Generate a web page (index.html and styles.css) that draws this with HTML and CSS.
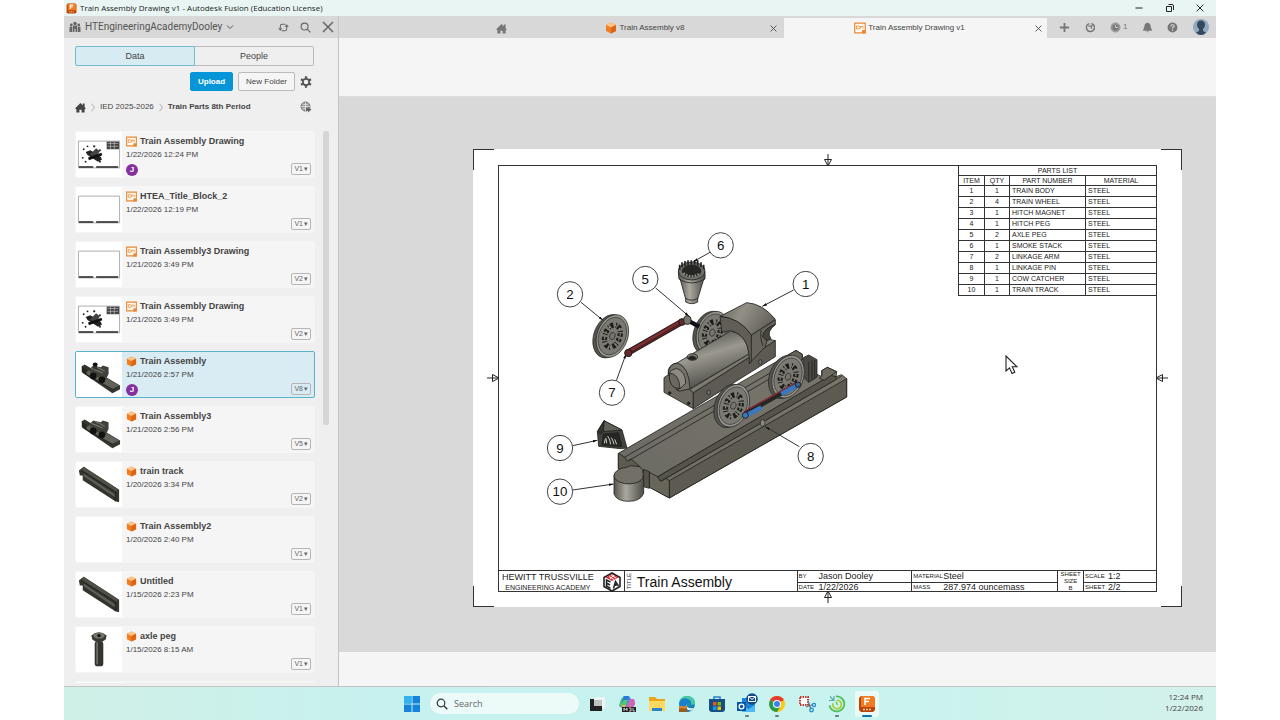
FILE: index.html
```html
<!DOCTYPE html>
<html lang="en">
<head>
<meta charset="utf-8">
<title>Train Assembly Drawing v1 - Autodesk Fusion (Education License)</title>
<link rel="stylesheet" href="styles.css">
</head>
<body>
<svg class="defs" aria-hidden="true">
  <defs>
    <linearGradient id="boiler" x1=".3" y1="0" x2=".7" y2="1"><stop offset=".1" stop-color="#5a5952"/><stop offset=".4" stop-color="#9a988f"/><stop offset=".9" stop-color="#4a4942"/></linearGradient>
    <linearGradient id="roof" x1="0" y1="0" x2="1" y2=".4"><stop offset="0" stop-color="#65635b"/><stop offset=".45" stop-color="#918f86"/><stop offset="1" stop-color="#65635b"/></linearGradient>
    <linearGradient id="round"><stop offset="0" stop-color="#55534c"/><stop offset=".4" stop-color="#aaa89f"/><stop offset="1" stop-color="#4c4b45"/></linearGradient>
    <linearGradient id="bed" x1="0" y1="1" x2="1" y2="0"><stop offset="0" stop-color="#6b6a63"/><stop offset="1" stop-color="#7a766c"/></linearGradient>
    <linearGradient id="edge" x1="0" y1="0" x2="1" y2="1"><stop offset="0" stop-color="#37c3b0"/><stop offset="1" stop-color="#0b63b8"/></linearGradient>
    <marker id="tip" viewBox="0 0 14 8" refX="14" refY="4" markerWidth="14" markerHeight="8" markerUnits="userSpaceOnUse" orient="auto"><path d="M0 0 14 4 0 8z" fill="#111"/></marker>
  </defs>
  <symbol id="cube" viewBox="0 0 12 12"><path d="M6 .5 11 3v6L6 11.500 1 9V3z" fill="#ef7d22"/><path d="M6 .5 11 3 6 5.500 1 3z" fill="#ffc48c"/><path d="M6 5.500 11 3v6l-5 2.500z" fill="#dc6413"/></symbol>
  <symbol id="dwg" viewBox="0 0 12 11"><path d="M.7.7h10.600v9.600H.7z" fill="#fff8f0" stroke="#e88a35" stroke-width="1.200"/><path d="M2.500 3.500h2q1.500 0 1.500 1.500T4.500 6.500h-2zM6.500 6V4h2.500v2" fill="none" stroke="#e88a35" stroke-width=".8"/><path d="M8 7.500h3.500V11H8z" fill="#e88a35"/></symbol>
  <symbol id="fusion" viewBox="0 0 18 18"><path d="M3 1h12l2 2v12l-2 2H3l-2-2V3z" fill="#b94405"/><path d="M4 1h11l2 2v9H3V2z" fill="#f27b21"/><path d="M7 10V3.500h5M7 6.500h4" fill="none" stroke="#fff" stroke-width="1.700"/><path d="M5 14.500h8" stroke="#f9c9a0" stroke-width="1.500" stroke-dasharray="2 1"/></symbol>
  <symbol id="home" viewBox="0 0 12 12"><path d="M6 1 11.500 6.500V7.500H10.500v4H7.200V8.500H4.800v3H1.500v-4H.5v-1zM8.500 1.500H10.500V5.500L8.500 3.500z" fill="currentColor"/></symbol>
  <symbol id="close" viewBox="0 0 12 12"><path d="m1 1 10 10M11 1 1 11" fill="none" stroke="currentColor" stroke-width="1.500"/></symbol>
  <symbol id="lens" viewBox="0 0 12 12"><circle cx="5" cy="5" r="3.800" fill="none" stroke="currentColor" stroke-width="1.200"/><path d="m7.800 7.800 3.500 3.500" stroke="currentColor" stroke-width="1.400"/></symbol>
  <symbol id="chev" viewBox="0 0 8 12"><path d="m2 1 4 5-4 5" fill="none" stroke="#bbb" stroke-width="1.400"/></symbol>
  <symbol id="mark" viewBox="0 0 10 12"><path d="M5 12V0M1.500 6.500 5 0l3.500 6.500z" transform="rotate(180 5 6)" fill="none" stroke="#222"/></symbol>
  <symbol id="th-track" viewBox="0 0 46 47"><path d="M2 9l5-4 37 24v13l-4-1L6 19v-5H3z" fill="#34342f"/><path d="m7 5 37 24-4 2L5 9z" fill="#4f4f48"/><path d="m7 12 33 22v3L7 15z" fill="#5d5d55"/><path d="m5 9 35 22v10" fill="none" stroke="#1f1f1c"/></symbol>
  <symbol id="th-train" viewBox="0 0 46 47"><path d="M5 15l3-2 37 22v4l-8 4L6 22z" fill="#34342f"/><path d="m8 22 28 17 8-4-29-17z" fill="#62625a"/><path d="m9 23 28 16" stroke="#1d1d1b"/><path d="M13 18l4-4 8 2 2-2 6 2v7l-3 6-15-5z" fill="#41413b"/><circle cx="17" cy="25" r="3.500" fill="#111"/><circle cx="26" cy="29" r="3.500" fill="#111"/><path d="M5 15v6l5 3v-5z" fill="#26261f"/><path d="m15 17 12 5m-8-7 10 5" stroke="#85857b"/></symbol>
  <symbol id="th-peg" viewBox="0 0 46 47"><rect x="18.500" y="15" width="9" height="26" rx="3" fill="#34342f"/><path d="M21 16v23" stroke="#77776e" stroke-width="1.500"/><path d="M15 9q8-7 16 0l-1 4q-7 6-14 0z" fill="#3b3b36"/><ellipse cx="23" cy="9" rx="6" ry="3" fill="#74746c"/><circle cx="23" cy="9" r="1.800" fill="#111"/></symbol>
  <symbol id="th-sheet" viewBox="0 0 46 47"><path d="M1.500 9.500h43v28h-43z" fill="#fff" stroke="#aaa"/><path d="M2 36.500h15m3 0h23" stroke="#222" stroke-width="1.600"/></symbol>
  <symbol id="th-draw" viewBox="0 0 46 47"><use href="#th-sheet"/><path d="M31 10h13v8H31z" fill="#444"/><path d="M32 12h11M32 15h11M35 10v8M39 10v8" stroke="#bbb" stroke-width=".7"/><path d="m9 21 5-2 11 7 1 3-4 2-11-7z" fill="#222"/><path d="m13 24 7-7 4 3-4 6z" fill="#444"/><path d="m12 28 14-5" stroke="#111" stroke-width="3"/><g fill="#222"><circle cx="7" cy="18" r="1"/><circle cx="11" cy="15" r="1"/><circle cx="18" cy="15" r="1.200"/><circle cx="24" cy="19" r="1"/><circle cx="6" cy="27" r="1"/><circle cx="9" cy="31" r="1"/><circle cx="24" cy="31" r="1"/></g></symbol>
  <symbol id="wheel" viewBox="-60 -75 120 150" overflow="visible"><g transform="rotate(20)"><ellipse cx="-6" cy="3" rx="46" ry="67" fill="#55544d" stroke="#222" stroke-width="2"/><ellipse cx="3" cy="-1" rx="46" ry="66" fill="#97968e" stroke="#222" stroke-width="2"/><ellipse cx="3" cy="-1" rx="40" ry="58" fill="#7b7a72" stroke="#333" stroke-width="2"/><ellipse cx="3" cy="-1" rx="22" ry="34" fill="none" stroke="#1c1c1a" stroke-width="16" stroke-dasharray="9 7 3 4"/><ellipse cx="3" cy="-1" rx="22" ry="34" fill="none" stroke="#8a8981" stroke-width="4" stroke-dasharray="6 12"/><ellipse cx="3" cy="-1" rx="8" ry="11" fill="#77756c" stroke="#222" stroke-width="2"/></g></symbol>
</svg>

<div class="app">
  <header class="titlebar">
    <svg class="i11"><use href="#fusion"/></svg>
    <h1>Train Assembly Drawing v1 - Autodesk Fusion (Education License)</h1>
    <div class="winbtns">
      <button aria-label="Minimize"><svg viewBox="0 0 10 10"><path d="M1.500 5h7" stroke="currentColor"/></svg></button>
      <button aria-label="Restore"><svg viewBox="0 0 10 10"><path d="M1.500 3.500h5v5h-5zM3.500 1.500H7q1.500 0 1.500 1.500v4" fill="none" stroke="currentColor"/></svg></button>
      <button aria-label="Close"><svg viewBox="0 0 12 12"><use href="#close"/></svg></button>
    </div>
  </header>

  <div class="work">
    <aside class="panel">
      <div class="hub">
        <svg class="i12" viewBox="0 0 12 12"><g fill="currentColor"><circle cx="6" cy="2.500" r="1.700"/><path d="M4 4.500h4V11H6.500V8h-1v3H4z"/><circle cx="2.300" cy="4" r="1.400"/><path d="M.6 5.800H3.400v5.200H.5z"/><circle cx="9.700" cy="4" r="1.400"/><path d="M8.600 5.800h2.800l.1 5.200H8.600z"/></g></svg>
        <button class="hubname">HTEngineeringAcademyDooley <svg class="i8" viewBox="0 0 8 8"><path d="m1 2.500 3 3 3-3" fill="none" stroke="currentColor"/></svg></button>
        <button class="ic" aria-label="Refresh"><svg class="i11" viewBox="0 0 12 12"><path d="M2.500 8.500V4.500q0-2 2-2h3.500M9.500 3.500v4q0 2-2 2H4M.8 6.800 2.500 8.800 4.300 6.800M7.700 5.200 9.500 3.200l1.700 2" fill="none" stroke="currentColor" stroke-width="1.100"/></svg></button>
        <button class="ic" aria-label="Search data"><svg class="i11"><use href="#lens"/></svg></button>
        <button class="ic" aria-label="Close panel"><svg class="i12"><use href="#close"/></svg></button>
      </div>
      <div class="panelbody">
        <div class="seg"><button class="on">Data</button><button>People</button></div>
        <div class="actions">
          <button class="btn primary">Upload</button><button class="btn">New Folder</button>
          <button class="ic" aria-label="Settings"><svg class="i12" viewBox="0 0 12 12"><circle cx="6" cy="6" r="3.200" fill="none" stroke="currentColor" stroke-width="1.800"/><path d="M6 .3v2M6 9.700v2M1 3.200l1.800 1M9.200 7.800l1.800 1M1 8.800l1.800-1M9.200 4.200l1.800-1" stroke="currentColor" stroke-width="2.200"/></svg></button>
        </div>
        <nav class="crumbs">
          <a href="#" aria-label="Home"><svg class="i11"><use href="#home"/></svg></a>
          <svg class="sep"><use href="#chev"/></svg><a href="#">IED 2025-2026</a><svg class="sep"><use href="#chev"/></svg><b>Train Parts 8th Period</b>
          <button class="ic" aria-label="Open on the web"><svg class="i12" viewBox="0 0 12 12"><circle cx="5.500" cy="5.500" r="4.500" fill="#999" stroke="#777"/><path d="M1 5.500h9M5.500 1v9M2.500 3q3 1.500 6 0M2.500 8q3-1.500 6 0" fill="none" stroke="#eee" stroke-width=".7"/><path d="M6 7h2V6l3.500 2.500L8 11.500V10H6z" fill="#666"/></svg></button>
        </nav>
        <div class="listwrap">
          <ul class="files">
            <li><svg class="thumb"><use href="#th-draw"/></svg><div class="info"><h2><svg><use href="#dwg"/></svg>Train Assembly Drawing</h2><p>1/22/2026 12:24 PM</p><span class="who">J</span></div><button class="ver">V1<i>▾</i></button></li>
            <li><svg class="thumb"><use href="#th-sheet"/></svg><div class="info"><h2><svg><use href="#dwg"/></svg>HTEA_Title_Block_2</h2><p>1/22/2026 12:19 PM</p></div><button class="ver">V1<i>▾</i></button></li>
            <li><svg class="thumb"><use href="#th-sheet"/></svg><div class="info"><h2><svg><use href="#dwg"/></svg>Train Assembly3 Drawing</h2><p>1/21/2026 3:49 PM</p></div><button class="ver">V2<i>▾</i></button></li>
            <li><svg class="thumb"><use href="#th-draw"/></svg><div class="info"><h2><svg><use href="#dwg"/></svg>Train Assembly Drawing</h2><p>1/21/2026 3:49 PM</p></div><button class="ver">V2<i>▾</i></button></li>
            <li class="sel"><svg class="thumb" viewBox="0 0 46 47"><use href="#th-train"/><path d="M17 12h4v6h-4z" fill="#333"/><ellipse cx="19" cy="13" rx="2.500" ry="2" fill="#111"/></svg><div class="info"><h2><svg><use href="#cube"/></svg>Train Assembly</h2><p>1/21/2026 2:57 PM</p><span class="who">J</span></div><button class="ver">V8<i>▾</i></button></li>
            <li><svg class="thumb"><use href="#th-train"/></svg><div class="info"><h2><svg><use href="#cube"/></svg>Train Assembly3</h2><p>1/21/2026 2:56 PM</p></div><button class="ver">V5<i>▾</i></button></li>
            <li><svg class="thumb"><use href="#th-track"/></svg><div class="info"><h2><svg><use href="#cube"/></svg>train track</h2><p>1/20/2026 3:34 PM</p></div><button class="ver">V2<i>▾</i></button></li>
            <li><svg class="thumb"></svg><div class="info"><h2><svg><use href="#cube"/></svg>Train Assembly2</h2><p>1/20/2026 2:40 PM</p></div><button class="ver">V1<i>▾</i></button></li>
            <li><svg class="thumb"><use href="#th-track"/></svg><div class="info"><h2><svg><use href="#cube"/></svg>Untitled</h2><p>1/15/2026 2:23 PM</p></div><button class="ver">V1<i>▾</i></button></li>
            <li><svg class="thumb"><use href="#th-peg"/></svg><div class="info"><h2><svg><use href="#cube"/></svg>axle peg</h2><p>1/15/2026 8:15 AM</p></div><button class="ver">V1<i>▾</i></button></li>
            <li><svg class="thumb"></svg></li>
          </ul>
          <div class="scroll"></div>
        </div>
      </div>
    </aside>

    <main class="doc">
      <div class="tabs">
        <button class="hometab" aria-label="Home"><svg class="i11"><use href="#home"/></svg></button>
        <div class="tab"><span><svg class="i12"><use href="#cube"/></svg>Train Assembly v8</span><button aria-label="Close tab"><svg><use href="#close"/></svg></button></div>
        <div class="tab on"><span><svg class="i12"><use href="#dwg"/></svg>Train Assembly Drawing v1</span><button aria-label="Close tab"><svg><use href="#close"/></svg></button></div>
        <div class="tools">
          <button aria-label="New tab"><svg class="i11" viewBox="0 0 12 12"><path d="M6 1v10M1 6h10" stroke="currentColor" stroke-width="2"/></svg></button>
          <button aria-label="Extensions"><svg class="i11" viewBox="0 0 12 12"><path d="M5 1.800a4.300 4.300 0 1 0 5.200 4.200M7 1.800q3.200.7 3.200 4" fill="none" stroke="currentColor" stroke-width="1.600"/><path d="M3.500 4.500h3.500v3M7 4.500l2-2" fill="none" stroke="currentColor" stroke-width="1.200"/></svg></button>
          <button aria-label="Job status"><svg class="i11" viewBox="0 0 12 12"><circle cx="6" cy="6" r="5" fill="#999" stroke="#999"/><circle cx="6" cy="6" r="3.200" fill="#777"/><path d="M6 3.500V6h2.500" fill="none" stroke="#ddd"/></svg>1</button>
          <button aria-label="Notifications"><svg class="i11" viewBox="0 0 12 12"><path d="M6 .5q3.500 1 3.500 5L11 9.500H1L2.500 5.500q0-4 3.500-5zM4.700 10h2.600L6 11.500z" fill="currentColor"/></svg></button>
          <button aria-label="Help"><svg class="i11" viewBox="0 0 12 12"><circle cx="6" cy="6" r="5.400" fill="currentColor"/><path d="M4.200 4.800Q4.200 3 6 3t1.800 1.600Q7.800 5.500 6 6.300v.9M6 8.200v1.300" fill="none" stroke="#ddd" stroke-width="1.200"/></svg></button>
          <button aria-label="Account"><svg class="i16" viewBox="0 0 16 16"><circle cx="8" cy="8" r="8" fill="#91aabf"/><path d="M8 1.500q4 0 4 4.500 0 2.500-2 4V12l3 1.500Q11 16 8 16t-5-2.500L6 12v-2q-2-1.500-2-4 0-4.500 4-4.500z" fill="#34495c"/></svg></button>
        </div>
      </div>
      <div class="ribbon"></div>
      <section class="canvas">
        <div class="sheet">
          <i class="cr tl"></i><i class="cr tr"></i><i class="cr bl"></i><i class="cr br"></i>
          <svg class="mk top"><use href="#mark"/></svg><svg class="mk bottom"><use href="#mark"/></svg><svg class="mk left"><use href="#mark"/></svg><svg class="mk right"><use href="#mark"/></svg>
          <div class="frame">
            <div class="view">
              <svg class="model" viewBox="-123 -162 1377 1212" role="img" aria-label="Exploded view of the train assembly">
                <g stroke="#24231f" stroke-width="2.500" stroke-linejoin="round">
                  <path d="M235 700 768 391 787 403 787 440 845 470 845 452 862 442 890 455 888 470 905 464 920 476V531L388 834 330 802 325 760 235 745z" fill="url(#bed)"/>
                  <path d="M388 782 920 476V531L388 834z" fill="#5c5a51"/>
                  <path d="M328 757 355 771 362 783 375 774 388 782V834L328 802z" fill="#68655a"/>
                  <path d="M235 700 255 712 262 724 273 717 300 740 235 747z" fill="#5e5b51"/>
                  <path d="m255 711 503-291M266 722l500-290M352 771 872 468M364 783 888 477M376 772 905 468" fill="none"/>
                  <path d="M362 784 352 771 872 466 888 470 888 479z" fill="#55534a"/>
                  <path d="m734 412 34-21 19 12v16l-18 8z" fill="#65635a"/>
                  <path d="m790 413 16-8 25 14v52l-25 16-16-16z" fill="#4a4943"/><path d="M806 425v62M816 422v58M824 420v55" fill="none"/>
                  <path d="M862 442 890 455 852 481 838 474q12-8 7-22z" fill="#6d6a60"/>
                  <path d="m310 748 18 7v50l-18-5z" fill="#55534b"/>
                  <path d="M222 765V822Q230 844 266 844T311 820V765z" fill="url(#round)"/>
                  <path d="M300 740q11 10 10 25a44 25 0 1 1-50-23l12-5z" fill="#716f66"/>
                </g>
                <use href="#wheel" x="454" y="263" width="120" height="150"/>
                <g stroke="#24231f" stroke-width="2.500" stroke-linejoin="round">
                  <path d="M372 473 388 462 460 518V566L372 517z" fill="#6a685f"/>
                  <path d="m460 518 246-156v48L520 527 460 566z" fill="#5c5a52"/>
                  <path d="m450 508 178-107 52-45 26 6-246 156z" fill="#7c7a70"/>
                  <path d="M385 463Q380 435 412 428L572 333q46 8 56 68L450 506 412 512z" fill="url(#boiler)"/>
                  <path d="M385 463q0-32 28-34 34 12 37 77l-32 8z" fill="#75736a"/>
                  <path d="M388 459Q390 449 410 445 438 456 437 490L420 506 400 500Q386 480 388 459z" fill="#8d8b81"/>
                  <path d="M388 459q30 2 32 47-36 0-32-47z" fill="#6b695f"/>
                  <ellipse cx="457" cy="411" rx="16" ry="10" fill="#77756c"/><path d="M444 415q12-13 25 0-10 9-25 0z" fill="#22211e"/>
                  <path d="M634 345 706 300V314q-34 10-38 36l13 12-5 18-48 50z" fill="#67655b"/>
                  <path d="M706 314q-34 10-38 36l13 12 12-6q-16-20 13-42z" fill="#45443e"/>
                  <path d="M663 330q-4 22 5 48" fill="none"/>
                  <path d="M540 289 546 337 572 332q30 7 44 33 12 22 12 66l6-4V345Q600 293 540 289z" fill="#605e55"/>
                  <path d="M540 289 620 248Q668 251 706 298L634 345Q600 293 540 289z" fill="url(#roof)"/>
                  <ellipse cx="506" cy="517" rx="5" ry="7" fill="#777"/><ellipse cx="661" cy="426" rx="5" ry="7" fill="#777"/>
                  <circle cx="389" cy="519" r="4" fill="#222"/><circle cx="446" cy="550" r="4" fill="#222"/>
                </g>
                <use href="#wheel" x="154" y="273" width="120" height="150"/>
                <use href="#wheel" x="681" y="395" width="120" height="150"/>
                <use href="#wheel" x="517" y="482" width="120" height="150"/>
                <path d="m616 580 157-88" stroke="#252525" stroke-width="15"/><path d="m616 573 150-84" stroke="#8b2930" stroke-width="4"/>
                <path d="m616 588 48-26M724 522l50-27" stroke="#3977c2" stroke-width="13"/><circle cx="616" cy="586" r="9" fill="#3e78b9" stroke="#222" stroke-width="3"/><circle cx="774" cy="494" r="8" fill="#37669b" stroke="#222" stroke-width="3"/>
                <path d="m266 397 160-92" stroke="#231718" stroke-width="19"/><path d="m266 397 160-92" stroke="#7c2e31" stroke-width="13"/><path d="m268 400 158-92" stroke="#331a1a" stroke-width="3"/>
                <circle cx="265" cy="399" r="11" fill="#642a2c" stroke="#231718" stroke-width="3"/><circle cx="426" cy="306" r="10" fill="#642a2c" stroke="#231718" stroke-width="3"/>
                <path d="m444 302 34 18" stroke="#111" stroke-width="13"/><ellipse cx="442" cy="300" rx="11" ry="13" fill="#76756e" stroke="#222" stroke-width="3"/>
                <g stroke="#222" stroke-width="2.500">
                  <path d="M417 165 437 237V246q19 10 36 0V237L495 165z" fill="url(#round)"/><path d="M437 235q19 11 36 0" fill="none"/>
                  <path d="m415 155 2 22q38 24 78 0v-22z" fill="url(#round)"/>
                  <ellipse cx="455" cy="153" rx="40" ry="27" fill="#6f6e66"/><ellipse cx="455" cy="153" rx="28" ry="18" fill="#262624"/>
                  <path d="M419 150v-16m7 8v-15m9 11v-15m9 12v-14m10 13v-13m10 13v-14m9 17v-16m10 21v-15m8 21v-14" stroke-width="5"/>
                  <path d="M430 160q25 18 50 0" stroke="#888" stroke-width="8" stroke-dasharray="5 4" fill="none"/>
                  <path d="M172 635 192 602 246 630 261 684 242 686 176 679z" fill="#44433e"/><path d="m192 602 54 28-56 5z" fill="#605f58"/><path d="m172 635 20-33-2 33-8 8z" fill="#33322f"/><path d="m190 642 46-4 10 42-61-4z" fill="#262624"/>
                </g>
                <path d="M193 670q5-30 7 0m3-22q8 12 9 25m2-20q6 10 8 20m2-15 6 15" fill="none" stroke="#c9c9c2" stroke-width="3"/>
                <ellipse cx="668" cy="609" rx="7" ry="10" fill="#8a887f" stroke="#222" stroke-width="2"/>
                <g stroke="#333" stroke-width="3">
                  <path d="m510 97-50 28" marker-end="url(#tip)"/><path d="M347 204 447 289" marker-end="url(#tip)"/><path d="m123 247 66 54" marker-end="url(#tip)"/><path d="m761 210-94 49" marker-end="url(#tip)"/><path d="M229 482 258 402" marker-end="url(#tip)"/><path d="m778 680-102-60" marker-end="url(#tip)"/><path d="m98 677 74-16" marker-end="url(#tip)"/><path d="m98 810 123-18" marker-end="url(#tip)"/>
                </g>
                <g class="balloons">
                  <circle cx="797" cy="192" r="38"/><circle cx="90" cy="223" r="38"/><circle cx="316" cy="177" r="38"/><circle cx="542" cy="76" r="38"/><circle cx="216" cy="518" r="38"/><circle cx="812" cy="708" r="38"/><circle cx="60" cy="684" r="38"/><circle cx="60" cy="815" r="38"/>
                  <text x="797" y="206">1</text><text x="90" y="237">2</text><text x="316" y="191">5</text><text x="542" y="90">6</text><text x="216" y="532">7</text><text x="812" y="722">8</text><text x="60" y="698">9</text><text x="60" y="829">10</text>
                </g>
              </svg>
              <table class="parts">
                <colgroup><col class="c1"><col class="c2"><col class="c3"><col></colgroup>
                <thead><tr><th colspan="4">PARTS LIST</th></tr><tr><th>ITEM</th><th>QTY</th><th>PART NUMBER</th><th>MATERIAL</th></tr></thead>
                <tbody>
                  <tr><td>1</td><td>1</td><td>TRAIN BODY</td><td>STEEL</td></tr>
                  <tr><td>2</td><td>4</td><td>TRAIN WHEEL</td><td>STEEL</td></tr>
                  <tr><td>3</td><td>1</td><td>HITCH MAGNET</td><td>STEEL</td></tr>
                  <tr><td>4</td><td>1</td><td>HITCH PEG</td><td>STEEL</td></tr>
                  <tr><td>5</td><td>2</td><td>AXLE PEG</td><td>STEEL</td></tr>
                  <tr><td>6</td><td>1</td><td>SMOKE STACK</td><td>STEEL</td></tr>
                  <tr><td>7</td><td>2</td><td>LINKAGE ARM</td><td>STEEL</td></tr>
                  <tr><td>8</td><td>1</td><td>LINKAGE PIN</td><td>STEEL</td></tr>
                  <tr><td>9</td><td>1</td><td>COW CATCHER</td><td>STEEL</td></tr>
                  <tr><td>10</td><td>1</td><td>TRAIN TRACK</td><td>STEEL</td></tr>
                </tbody>
              </table>
            </div>
            <div class="block">
              <div class="school"><p><b>HEWITT TRUSSVILLE</b><span>ENGINEERING ACADEMY</span></p>
                <svg viewBox="0 0 18 20"><path d="M9 1 17 5.500v9L9 19 1 14.500v-9z" fill="#fff" stroke="#222" stroke-width="1.600"/><path d="M9 2 15.500 5.500 9 9 2.500 5.500z" fill="#d9343b"/><path d="m6 4.500 5 3M8 3l5 3M7 7l4-4" stroke="#fff" stroke-width=".9"/><path d="M7.500 10 3.500 8v6l4 2.300M3.500 11l3.500 2M10.500 16.500 12.500 9.500l3 4.500M11.500 13.500l3-1" fill="none" stroke="#222" stroke-width="1.500"/></svg></div>
              <div class="name"><small>TITLE</small><strong>Train Assembly</strong></div>
              <dl class="by"><dt>BY</dt><dd>Jason Dooley</dd><dt>DATE</dt><dd>1/22/2026</dd></dl>
              <dl class="mat"><dt>MATERIAL</dt><dd>Steel</dd><dt>MASS</dt><dd>287.974 ouncemass</dd></dl>
              <div class="size"><span>SHEET</span><span>SIZE</span><span>B</span></div>
              <dl class="scale"><dt>SCALE</dt><dd>1:2</dd><dt>SHEET</dt><dd>2/2</dd></dl>
            </div>
          </div>
          <svg class="cursor" viewBox="0 0 13 20"><path d="M1 1v15l3.500-3.200L7 18.500l2.800-1.200-2.500-5.500H12z" fill="#fff" stroke="#222" stroke-width="1.100"/></svg>
        </div>
      </section>
      <div class="status"></div>
    </main>
  </div>

  <footer class="taskbar">
    <div class="apps">
      <button aria-label="Start"><svg viewBox="0 0 18 18"><path d="M1 1h7.500v7.500H1zM9.500 1H17v7.500H9.500zM1 9.500h7.500V17H1zM9.500 9.500H17V17H9.500z" fill="#1583d8"/><path d="M1 1h7.500v7.500H1z" fill="#32b2ef"/></svg></button>
      <label class="search"><svg class="i12"><use href="#lens"/></svg><input type="text" placeholder="Search" aria-label="Search"></label>
      <button aria-label="Task view"><svg viewBox="0 0 18 18"><path d="M6 2h11v11H6z" fill="#eef4f3"/><path d="M2 4h4v7h8v5H2z" fill="#222"/><path d="M6 5h8v6H6z" fill="#bbc3c3"/></svg></button>
      <button aria-label="Copilot"><svg viewBox="0 0 18 18"><path d="M6 1h5l2 3h3l1 5-3 5H6L1 11l2-6z" fill="#3c8de0"/><path d="M6 1h5L8 11H1l2-7z" fill="#51c777"/><path d="M6 1h5l-1 4H6L3 9z" fill="#2a78df"/><path d="M12 4h4l1 5-3 4H8z" fill="#d763b5"/><path d="M3 10h5l-2 4z" fill="#f3b43c"/><path d="M4 12h14v5H4z" fill="#222"/><path d="M6 16v-3l1.500 2L9 13v3M11 13h2v3h-2M15 13v3h2" fill="none" stroke="#eee" stroke-width=".8"/></svg></button>
      <button aria-label="File Explorer"><svg viewBox="0 0 18 18"><path d="M1 2h6l2 2h8v12H1z" fill="#e8a817"/><path d="M1 6h16v10H1z" fill="#ffd862"/><path d="M4 13h10v3H4z" fill="#2b83cf"/></svg></button>
      <button aria-label="Edge"><svg viewBox="0 0 18 18"><circle cx="9" cy="9" r="8" fill="url(#edge)"/><path d="M1 9Q2 3 8 3.500q5 1 5 5-1 2 4 1 1-8-8-8.500Q2 1 1 9z" fill="#45c9a0"/><path d="M1 9q1-6 7-5.500 5 1 5 5l-5 .5q0 5 3 7.500Q3 17 1 9z" fill="#1a7fcb"/><path d="M8 9q0 5 8 4-1 1.500-3 2.500-6 0-5-6.500z" fill="#d5f7f5"/><path d="M1 11h8v6H1z" fill="#9a5b20"/><path d="M1 11h8v2.500H1z" fill="#d2872e"/></svg></button>
      <button aria-label="Microsoft Store"><svg viewBox="0 0 18 18"><path d="M6 5V2h6v3" fill="none" stroke="#2a7fc4" stroke-width="1.500"/><path d="M1 4h16v10q0 3-3 3H4q-3 0-3-3z" fill="#164f83"/><path d="M5 7h3.500v3.500H5z" fill="#f25022"/><path d="M9.500 7H13v3.500H9.500z" fill="#7fba00"/><path d="M5 11.500h3.500V15H5z" fill="#00a4ef"/><path d="M9.500 11.500H13V15H9.500z" fill="#ffb900"/></svg></button>
      <button class="open" aria-label="Outlook"><svg class="outlook" viewBox="0 0 22 22"><path d="M6 5h13v14H6z" fill="#1a84d8"/><path d="m6 12 6.500 4 6.500-4v7H6z" fill="#50b8f4"/><path d="M1 9h9v9H1z" fill="#0a55a3"/><circle cx="5.500" cy="13.500" r="2.400" fill="none" stroke="#fff" stroke-width="1.300"/><circle cx="16" cy="6" r="5.800" fill="#154c86"/><path d="M12.500 3.500h7v5h-7zl3.500 3 3.500-3" fill="none" stroke="#fff"/></svg></button>
      <button class="open" aria-label="Chrome"><svg viewBox="0 0 18 18"><circle cx="9" cy="9" r="8" fill="#fbc817"/><path d="M9 9 2.100 5A8 8 0 0 1 15.900 5z" fill="#e33b2e"/><path d="M9 9 2.100 5A8 8 0 0 0 9 17l3-5z" fill="#299b4c"/><circle cx="9" cy="9" r="4" fill="#fff"/><circle cx="9" cy="9" r="3" fill="#3c80e8"/></svg></button>
      <button aria-label="Snipping Tool"><svg viewBox="0 0 18 18"><path d="M2 2h8v8H2z" fill="#fff" stroke="#c43a31" stroke-width="2" stroke-dasharray="1.500 1"/><path d="m10 6 3 8M15 9.500 8 12" stroke="#66798a" stroke-width="1.300"/><circle cx="13.500" cy="15" r="1.800" fill="none" stroke="#2589cb" stroke-width="1.300"/><circle cx="16" cy="10" r="1.600" fill="none" stroke="#2589cb" stroke-width="1.300"/></svg></button>
      <button class="open" aria-label="Backup"><svg viewBox="0 0 18 18"><path d="M8 1.500a7.500 7.500 0 1 1-6.500 9" fill="none" stroke="#53bd59" stroke-width="1.800"/><path d="M9 5.200a4.300 4.300 0 1 1-4 3" fill="none" stroke="#a9cd38" stroke-width="1.800"/><path d="M9.500 10 8 6.500" stroke="#66bf58" stroke-width="1.400"/><path d="M1 5.500h5V1M6 5.500 2 1.500" fill="none" stroke="#58aaa8" stroke-width="1.200"/></svg></button>
      <button class="open current" aria-label="Autodesk Fusion"><svg><use href="#fusion"/></svg></button>
    </div>
    <time datetime="2026-01-22T12:24">12:24 PM<br>1/22/2026</time>
  </footer>
</div>
</body>
</html>
```
FILE: styles.css
```css
* { box-sizing: border-box; }
html, body { height: 100%; }
body { margin: 0; background: #fff; font: 8px/12px "Liberation Sans", Arial, sans-serif; color: #444; }
h1, h2, p, ul, dl, dd { margin: 0; padding: 0; }
ul { list-style: none; }
button { margin: 0; padding: 0; border: 0; background: none; font: inherit; color: inherit; }
a { color: inherit; text-decoration: none; }
svg { display: block; flex: none; }
.defs { position: absolute; width: 0; height: 0; }
.i8 { width: 8px; height: 8px; }
.i11 { width: 11px; height: 11px; }
.i12 { width: 12px; height: 12px; }
.i16 { width: 16px; height: 16px; }

.app { height: 100vh; margin: 0 5%; display: flex; flex-direction: column; }
.titlebar { flex: none; height: 16px; display: flex; align-items: center; gap: 3px; padding: 0 12px 0 2px; background: #e8f5f3; color: #222; }
.titlebar h1 { font: 8px/12px "Open Sans", "Noto Sans", sans-serif; }
.winbtns { margin-left: auto; display: flex; gap: 21px; }
.winbtns svg { width: 10px; height: 10px; }
.winbtns button:last-child svg { width: 8px; }

.work { flex: 1; min-height: 0; display: flex; }
.panel { flex: 0 0 275px; display: flex; flex-direction: column; background: #efefef; border-right: 1px solid #c4c4c4; }
.hub { flex: none; height: 22px; display: flex; align-items: center; gap: 11px; padding: 0 4px 0 5px; background: #d8d8d8; color: #666; }
.hubname { display: flex; align-items: center; gap: 4px; margin: 0 auto 0 -7px; font: 10px/14px Roboto, sans-serif; color: #555; }
.panelbody { flex: 1; min-height: 0; display: flex; flex-direction: column; padding: 8px 9px 3px 11px; }
.seg { display: flex; margin-right: 15px; height: 20px; flex: none; font-size: 9px; }
.seg button { flex: 1; border: 1px solid #bbb; border-radius: 0 2px 2px 0; }
.seg .on { background: #d6ecf2; border-color: #72bccc; border-radius: 2px 0 0 2px; }
.seg button + button { border-left: 0; }
.actions { flex: none; display: flex; justify-content: flex-end; align-items: center; gap: 5px; margin: 6px 17px 0 0; }
.actions .ic { color: #555; }
.btn { height: 19px; padding: 0 7px; border: 1px solid #bbb; border-radius: 2px; background: #f5f5f5; white-space: nowrap; }
.primary { background: #0696d7; border-color: #0696d7; color: #fff; font-weight: bold; }
.crumbs { flex: none; display: flex; align-items: center; gap: 4px; height: 14px; margin: 9px 17px 17px 0; }
.crumbs .sep { width: 6px; height: 9px; }
.crumbs .ic { margin-left: auto; }
.listwrap { flex: 1; min-height: 0; display: flex; gap: 8px; overflow: hidden; }
.files { flex: 1; display: flex; flex-direction: column; gap: 8px; }
.files li { flex: none; display: flex; height: 47px; background: #f5f5f5; border: 1px solid #f5f5f5; border-radius: 2px; }
.files li.sel { background: #d9ecf3; border-color: #57b2cb; }
.thumb { width: 46px; height: 45px; background: #fff; }
.info { flex: 1; padding: 3px 0 0 4px; }
.info h2 { display: flex; align-items: center; gap: 3px; font: bold 9px/12px "Liberation Sans", Arial, sans-serif; }
.info h2 svg { width: 11px; height: 11px; }
.info p { margin-top: 2px; line-height: 12px; }
.who { display: block; width: 12px; height: 12px; margin-top: 3px; border-radius: 50%; background: #862f9e; color: #fff; font-weight: bold; text-align: center; }
.ver { align-self: flex-end; display: flex; align-items: center; justify-content: center; gap: 1px; width: 20px; height: 12px; margin: 0 3px 2px 0; border: 1px solid #b5b5b5; border-radius: 2px; font-size: 7px; color: #666; }
.ver i { font: 7px/8px "DejaVu Sans", sans-serif; }
.scroll { flex: none; width: 6px; height: 294px; border-radius: 2px; background: #d6d6d6; }

.doc { flex: 1; min-width: 0; display: flex; flex-direction: column; background: #f5f5f5; }
.tabs { flex: none; display: grid; grid-template-columns: 181fr 264fr 263fr 169fr; height: 22px; padding-top: 2px; background: #d8d8d8; color: #777; }
.hometab { justify-self: end; margin-right: 13px; }
.tab { display: flex; align-items: center; padding-right: 7px; color: #444; }
.tab span { flex: 1; display: flex; align-items: center; justify-content: center; gap: 2px; }
.tab svg:not(.i12) { width: 7px; height: 7px; }
.tab.on { background: #f5f5f5; padding-right: 5px; }
.tools { display: flex; align-items: center; justify-content: space-between; padding: 0 7px 2px 12px; }
.tools button { display: flex; align-items: center; gap: 2px; }
.ribbon { flex: none; height: 59px; border-bottom: 1px solid #ddd; }
.canvas { flex: 1; min-height: 0; display: flex; padding: 52px 34px 45px 134px; background: #d9d9d9; }
.status { flex: none; height: 34px; }

.sheet { position: relative; flex: 1; display: flex; padding: 16px 25px 15px; background: #fff; color: #222; }
.cr { position: absolute; width: 21px; height: 21px; border: 0 solid #333; }
.tl { top: 0; left: 0; border-width: 1px 0 0 1px; }
.tr { top: 0; right: 0; border-width: 1px 1px 0 0; }
.bl { bottom: 0; left: 0; border-width: 0 0 1px 1px; }
.br { bottom: 0; right: 0; border-width: 0 1px 1px 0; }
.mk { position: absolute; width: 10px; height: 12px; }
.mk.top { top: 5px; left: 50%; margin-left: -5px; }
.mk.bottom { bottom: 4px; left: 50%; margin-left: -5px; transform: rotate(180deg); }
.mk.left { left: 15px; top: 50%; margin-top: -6px; transform: rotate(-90deg); }
.mk.right { right: 15px; top: 50%; margin-top: -6px; transform: rotate(90deg); }
.frame { flex: 1; min-width: 0; display: flex; flex-direction: column; border: 1px solid #333; }
.view { flex: 1; min-height: 0; display: flex; }
.model { flex: 1; min-width: 0; height: 100%; }
.balloons circle { fill: #fff; stroke: #444; stroke-width: 3px; }
.balloons text { font: 40px "Liberation Sans", Arial, sans-serif; text-anchor: middle; fill: #111; }
.parts { flex: none; align-self: flex-start; width: 199px; margin: -1px -1px 0 0; border-collapse: collapse; table-layout: fixed; font-size: 7px; line-height: 8px; }
.parts tr { height: 11px; }
.parts thead tr { height: 10px; }
.parts th, .parts td { padding: 0; border: 1px solid #333; font-weight: normal; text-align: center; }
.parts td:nth-child(n+3) { padding-left: 2px; text-align: left; }
.c1 { width: 26px; }
.c2 { width: 25px; }
.c3 { width: 76px; }

.block { flex: none; display: grid; grid-template-columns: 125fr 173fr 115fr 146fr 26fr 73fr; height: 21px; border-top: 1px solid #333; }
.block > * + * { border-left: 1px solid #333; }
.school { display: flex; align-items: center; justify-content: space-between; padding: 0 3px; text-align: center; }
.school b { display: block; font-weight: normal; font-size: 9px; line-height: 11px; }
.school span { display: block; font-size: 7px; line-height: 9px; white-space: nowrap; }
.school svg { width: 18px; height: 20px; }
.name { display: flex; align-items: center; gap: 4px; padding-left: 1px; }
.name small { writing-mode: vertical-rl; transform: rotate(180deg); font-size: 6px; line-height: 7px; }
.name strong { font-weight: normal; font-size: 14px; line-height: 16px; color: #111; }
.block dl { display: grid; grid-template-columns: 19px 1fr; grid-template-rows: 1fr 1fr; align-items: center; }
.block .mat { grid-template-columns: 29px 1fr; }
.block .scale { grid-template-columns: 22px 1fr; }
.block dt { font-size: 6px; line-height: 9px; padding-left: 1px; }
.block dd { font-size: 9px; line-height: 10px; padding-left: 2px; white-space: nowrap; }
.block dt:nth-of-type(2), .block dd:nth-of-type(2) { border-top: 1px solid #333; line-height: 9px; align-self: stretch; }
.size { text-align: center; font-size: 6px; line-height: 7px; }
.size span { display: block; }
.cursor { position: absolute; left: 75%; top: 45%; width: 13px; height: 20px; }

.taskbar { flex: none; height: 34px; display: grid; grid-template-columns: 1fr auto 1fr; align-items: center; padding: 0 13px 0 12px; border-top: 1px solid #c4c4c4; background: linear-gradient(90deg, #d0f0e7, #c6f1ef 30%, #c9f3ee 70%, #d4f1eb); }
.apps { grid-column: 2; display: flex; align-items: center; gap: 6px; }
.apps button { display: flex; align-items: center; justify-content: center; width: 24px; height: 26px; position: relative; }
.apps button svg { width: 18px; height: 18px; }
.apps button svg.outlook { width: 22px; height: 22px; }
.apps .open::after { content: ""; position: absolute; bottom: 0; left: 10px; width: 4px; height: 2px; border-radius: 1px; background: #777; }
.apps .current { background: #e9faf7; border-radius: 3px; }
.apps .current::after { left: 7px; width: 10px; background: #0b75a8; }
.search { display: flex; align-items: center; gap: 6px; width: 149px; height: 21px; padding: 0 6px; border-radius: 11px; background: #ecfbf8; color: #333; }
.search input { flex: 1; min-width: 0; padding: 0; border: 0; background: none; outline: 0; font: 9px/14px "Open Sans", "Noto Sans", sans-serif; }
.search input::placeholder { color: #666; opacity: 1; }
.taskbar time { padding-bottom: 3px; text-align: right; font: 8px/11px "Open Sans", "Noto Sans", sans-serif; color: #444; }
```
